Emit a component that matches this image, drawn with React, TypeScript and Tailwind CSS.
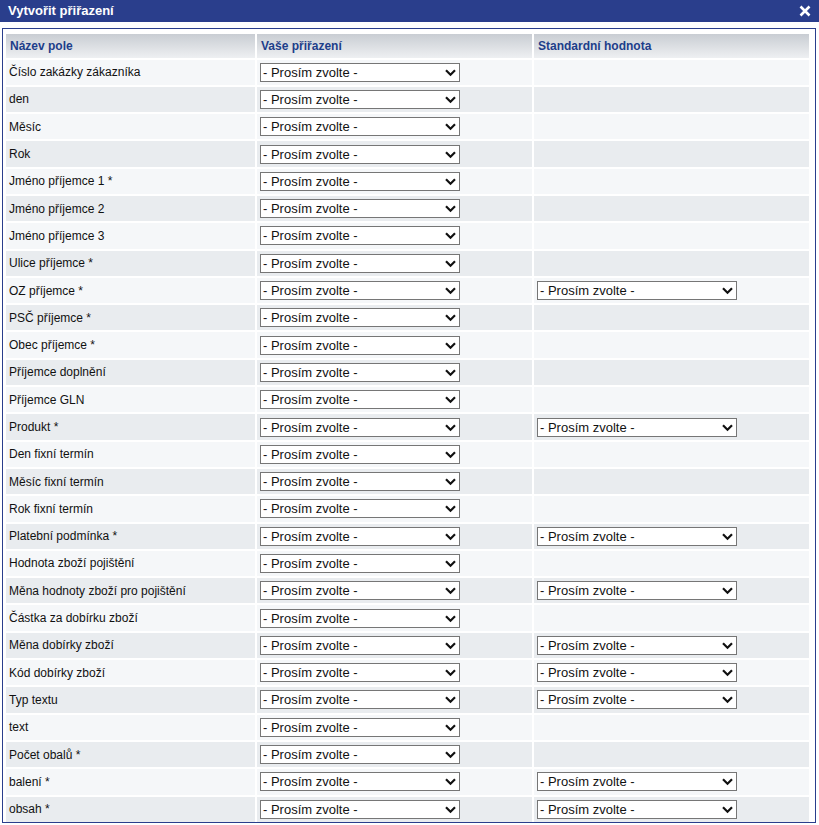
const rows: { label: string; std?: boolean }[] = [
  { label: 'Číslo zakázky zákazníka' },
  { label: 'den' },
  { label: 'Měsíc' },
  { label: 'Rok' },
  { label: 'Jméno příjemce 1 *' },
  { label: 'Jméno příjemce 2' },
  { label: 'Jméno příjemce 3' },
  { label: 'Ulice příjemce *' },
  { label: 'OZ příjemce *', std: true },
  { label: 'PSČ příjemce *' },
  { label: 'Obec příjemce *' },
  { label: 'Příjemce doplnění' },
  { label: 'Příjemce GLN' },
  { label: 'Produkt *', std: true },
  { label: 'Den fixní termín' },
  { label: 'Měsíc fixní termín' },
  { label: 'Rok fixní termín' },
  { label: 'Platební podmínka *', std: true },
  { label: 'Hodnota zboží pojištění' },
  { label: 'Měna hodnoty zboží pro pojištění', std: true },
  { label: 'Částka za dobírku zboží' },
  { label: 'Měna dobírky zboží', std: true },
  { label: 'Kód dobírky zboží', std: true },
  { label: 'Typ textu', std: true },
  { label: 'text' },
  { label: 'Počet obalů *' },
  { label: 'balení *', std: true },
  { label: 'obsah *', std: true },
];

function Select() {
  return (
    <div className="relative ml-[3px] h-[19px] w-[200px] leading-none">
      <select className="block h-[19px] w-full appearance-none border border-[#767676] bg-white py-0 pl-[2px] text-[13px] leading-[17px] text-[#111]">
        <option>- Prosím zvolte -</option>
      </select>
      <svg
        className="pointer-events-none absolute right-[4px] top-[6px]"
        width="11"
        height="8"
        viewBox="0 0 11 8"
      >
        <path d="M1 1.3 L5.5 5.8 L10 1.3" fill="none" stroke="#111" strokeWidth="2.2" />
      </svg>
    </div>
  );
}

export default function App() {
  return (
    <div className="h-[825px] w-[819px] overflow-hidden bg-white font-['Liberation_Sans',Arial,sans-serif]">
      {/* Title bar */}
      <div className="flex h-[22px] items-center justify-between bg-[#2a3e8c] pl-[8px] pr-[8px]">
        <span className="text-[13px] font-bold text-white">Vytvořit přiřazení</span>
        <svg width="12" height="12" viewBox="0 0 12 12">
          <path d="M1.5 1.5 L10.5 10.5 M10.5 1.5 L1.5 10.5" stroke="#fff" strokeWidth="2.6" />
        </svg>
      </div>

      <div className="ml-[2px] mt-[6px] w-[814px] border border-[#2a3e8c] px-[3px] pt-[5px]">
        <div className="grid grid-cols-[249px_275px_275px] gap-[2px]">
          {['Název pole', 'Vaše přiřazení', 'Standardní hodnota'].map((h) => (
            <div
              key={h}
              className="flex h-[23.5px] items-center bg-gradient-to-b from-[#c9cdd3] to-[#eef0f2] pl-[4px] text-[12px] font-bold text-[#1d3e8a]"
            >
              {h}
            </div>
          ))}
          {rows.map((r, i) => {
            const bg = i % 2 === 0 ? 'bg-[#f5f7f9]' : 'bg-[#e9ecef]';
            return [
              <div
                key={r.label + 'a'}
                className={`flex h-[25.3px] items-center pl-[3px] text-[12px] text-[#111] ${bg}`}
              >
                {r.label}
              </div>,
              <div key={r.label + 'b'} className={`flex h-[25.3px] items-center ${bg}`}>
                <Select />
              </div>,
              <div key={r.label + 'c'} className={`flex h-[25.3px] items-center ${bg}`}>
                {r.std && <Select />}
              </div>,
            ];
          })}
        </div>
      </div>
    </div>
  );
}
